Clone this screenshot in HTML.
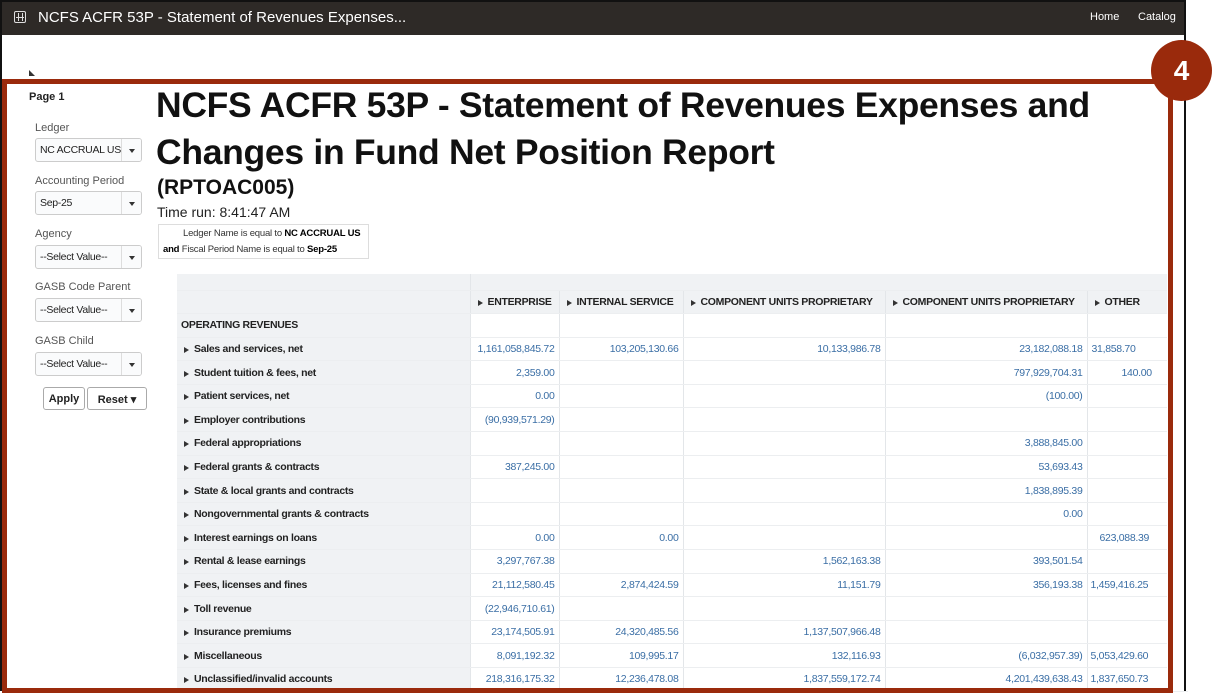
<!DOCTYPE html>
<html><head><meta charset="utf-8"><style>
*{margin:0;padding:0;box-sizing:border-box}
body{width:1213px;height:691px;overflow:hidden;background:#fff;font-family:"Liberation Sans",sans-serif;position:relative}
.a{position:absolute;white-space:nowrap}
.frame{position:absolute;left:0;top:0;width:1186px;height:691px;border:2px solid #111;border-bottom:none}
.bar{position:absolute;left:2px;top:2px;width:1182px;height:33px;background:#2e2a27;color:#fff}
.lbl{font-size:11px;color:#555}
.sel{position:absolute;width:107px;height:24px;border:1px solid #ccc;border-radius:3px;background:#fafbfc;font-size:10.5px;color:#222;padding:5px 0 0 4px;letter-spacing:-0.3px;overflow:hidden}
.sel:after{content:"";position:absolute;right:6px;top:10px;border:3.5px solid transparent;border-top:4px solid #333;border-bottom:none}
.sel i{position:absolute;right:20px;top:0;bottom:0;border-left:1px solid #ddd;background:#fafbfc;width:20px;margin-right:-20px}
.btn{position:absolute;height:23px;border:1px solid #aaa;border-radius:3px;background:#fff;font-size:11px;font-weight:bold;color:#222;text-align:center;padding-top:5px}
table{position:absolute;left:177px;top:274px;border-collapse:collapse;font-size:10.5px;table-layout:fixed;width:1010px;letter-spacing:-0.3px}
td{height:23.6px;border-bottom:1px solid #eceef0;border-right:1px solid #e3e6e9;padding:0 4px;white-space:nowrap;overflow:hidden}
td.l{background:#f0f2f4;font-weight:bold;color:#222}
td.n{color:#3a6ea5;text-align:right}
tr.h td{background:#f0f2f4;font-weight:bold;color:#222}
.t{display:inline-block;border:3.5px solid transparent;border-left:5px solid #333;border-right:none;margin:0 5px 0 3px;vertical-align:-1px}
.red{position:absolute;border:5px solid #9a2a0c}
</style></head><body>
<div class="frame"></div>
<div class="bar">
<div class="a" style="left:12px;top:9px;width:12px;height:12px;border:1.5px solid #ddd;border-radius:2px"></div>
<div class="a" style="left:16px;top:11px;width:1px;height:8px;background:#ddd"></div>
<div class="a" style="left:20px;top:11px;width:1px;height:8px;background:#ddd"></div>
<div class="a" style="left:14px;top:15px;width:8px;height:1px;background:#ddd"></div>
<div class="a" style="left:36px;top:7px;font-size:15px;color:#fff">NCFS ACFR 53P - Statement of Revenues Expenses...</div>
<div class="a" style="left:1088px;top:9px;font-size:11px;color:#fff">Home</div>
<div class="a" style="left:1136px;top:9px;font-size:11px;color:#fff">Catalog</div>
</div>
<div class="a" style="left:29px;top:70px;border:3px solid transparent;border-bottom:3px solid #333;border-left:3px solid #333"></div>

<div class="a" style="left:29px;top:91px;font-size:11px;font-weight:bold;color:#222">Page 1</div>
<div class="a lbl" style="left:35px;top:122px">Ledger</div>
<div class="sel" style="left:35px;top:138px">NC ACCRUAL US<i></i></div>
<div class="a lbl" style="left:35px;top:175px">Accounting Period</div>
<div class="sel" style="left:35px;top:191px">Sep-25<i></i></div>
<div class="a lbl" style="left:35px;top:228px">Agency</div>
<div class="sel" style="left:35px;top:245px">--Select Value--<i></i></div>
<div class="a lbl" style="left:35px;top:281px">GASB Code Parent</div>
<div class="sel" style="left:35px;top:298px">--Select Value--<i></i></div>
<div class="a lbl" style="left:35px;top:335px">GASB Child</div>
<div class="sel" style="left:35px;top:352px">--Select Value--<i></i></div>
<div class="btn" style="left:43px;top:387px;width:42px">Apply</div>
<div class="btn" style="left:87px;top:387px;width:60px">Reset ▾</div>

<div class="a" style="left:156px;top:82px;font-size:35.5px;font-weight:bold;color:#111;line-height:47px;letter-spacing:-0.3px">NCFS ACFR 53P - Statement of Revenues Expenses and<br>Changes in Fund Net Position Report</div>
<div class="a" style="left:157px;top:176px;font-size:21px;font-weight:bold;color:#111">(RPTOAC005)</div>
<div class="a" style="left:157px;top:204px;font-size:14px;color:#222">Time run: 8:41:47 AM</div>
<div class="a" style="left:158px;top:224px;width:211px;height:35px;border:1px solid #ddd;font-size:9.5px;color:#333;line-height:16px;padding:1px 0 0 4px;letter-spacing:-0.2px">
<div style="padding-left:20px">Ledger Name is equal to <b style="color:#000">NC ACCRUAL US</b></div>
<div><b style="color:#000">and</b> Fiscal Period Name is equal to <b style="color:#000">Sep-25</b></div></div>

<table>
<colgroup><col style="width:293px"><col style="width:89px"><col style="width:124px"><col style="width:202px"><col style="width:202px"><col style="width:100px"></colgroup>
<tr class="h"><td style="height:16px"></td><td colspan="5" style="height:16px"></td></tr>
<tr class="h"><td></td><td><span class="t"></span>ENTERPRISE</td><td><span class="t"></span>INTERNAL SERVICE</td><td><span class="t"></span>COMPONENT UNITS PROPRIETARY</td><td><span class="t"></span>COMPONENT UNITS PROPRIETARY</td><td><span class="t"></span>OTHER</td></tr>
<tr><td class="l">OPERATING REVENUES</td><td></td><td></td><td></td><td></td><td></td></tr>
<tr><td class="l"><span class="t"></span>Sales and services, net</td><td class="n">1,161,058,845.72</td><td class="n">103,205,130.66</td><td class="n">10,133,986.78</td><td class="n">23,182,088.18</td><td class="n" style="text-align:left;padding-left:4px">31,858.70</td></tr>
<tr><td class="l"><span class="t"></span>Student tuition &amp; fees, net</td><td class="n">2,359.00</td><td></td><td></td><td class="n">797,929,704.31</td><td class="n" style="text-align:left;padding-left:34px">140.00</td></tr>
<tr><td class="l"><span class="t"></span>Patient services, net</td><td class="n">0.00</td><td></td><td></td><td class="n">(100.00)</td><td></td></tr>
<tr><td class="l"><span class="t"></span>Employer contributions</td><td class="n">(90,939,571.29)</td><td></td><td></td><td></td><td></td></tr>
<tr><td class="l"><span class="t"></span>Federal appropriations</td><td></td><td></td><td></td><td class="n">3,888,845.00</td><td></td></tr>
<tr><td class="l"><span class="t"></span>Federal grants &amp; contracts</td><td class="n">387,245.00</td><td></td><td></td><td class="n">53,693.43</td><td></td></tr>
<tr><td class="l"><span class="t"></span>State &amp; local grants and contracts</td><td></td><td></td><td></td><td class="n">1,838,895.39</td><td></td></tr>
<tr><td class="l"><span class="t"></span>Nongovernmental grants &amp; contracts</td><td></td><td></td><td></td><td class="n">0.00</td><td></td></tr>
<tr><td class="l"><span class="t"></span>Interest earnings on loans</td><td class="n">0.00</td><td class="n">0.00</td><td></td><td></td><td class="n" style="text-align:left;padding-left:12px">623,088.39</td></tr>
<tr><td class="l"><span class="t"></span>Rental &amp; lease earnings</td><td class="n">3,297,767.38</td><td></td><td class="n">1,562,163.38</td><td class="n">393,501.54</td><td></td></tr>
<tr><td class="l"><span class="t"></span>Fees, licenses and fines</td><td class="n">21,112,580.45</td><td class="n">2,874,424.59</td><td class="n">11,151.79</td><td class="n">356,193.38</td><td class="n" style="text-align:left;padding-left:3px">1,459,416.25</td></tr>
<tr><td class="l"><span class="t"></span>Toll revenue</td><td class="n">(22,946,710.61)</td><td></td><td></td><td></td><td></td></tr>
<tr><td class="l"><span class="t"></span>Insurance premiums</td><td class="n">23,174,505.91</td><td class="n">24,320,485.56</td><td class="n">1,137,507,966.48</td><td></td><td></td></tr>
<tr><td class="l"><span class="t"></span>Miscellaneous</td><td class="n">8,091,192.32</td><td class="n">109,995.17</td><td class="n">132,116.93</td><td class="n">(6,032,957.39)</td><td class="n" style="text-align:left;padding-left:3px">5,053,429.60</td></tr>
<tr><td class="l"><span class="t"></span>Unclassified/invalid accounts</td><td class="n">218,316,175.32</td><td class="n">12,236,478.08</td><td class="n">1,837,559,172.74</td><td class="n">4,201,439,638.43</td><td class="n" style="text-align:left;padding-left:3px">1,837,650.73</td></tr>
</table>
<div class="a" style="left:1167px;top:270px;width:46px;height:421px;background:#fff"></div>
<div class="a" style="left:1184px;top:0;width:2px;height:691px;background:#111"></div>
<div class="red" style="left:2px;top:79px;width:1171px;height:614px"></div>
<div class="a" style="left:1151px;top:40px;width:61px;height:61px;border-radius:50%;background:#9a2a0c;color:#fff;font-size:28px;font-weight:bold;text-align:center;line-height:61px">4</div>
</body></html>
